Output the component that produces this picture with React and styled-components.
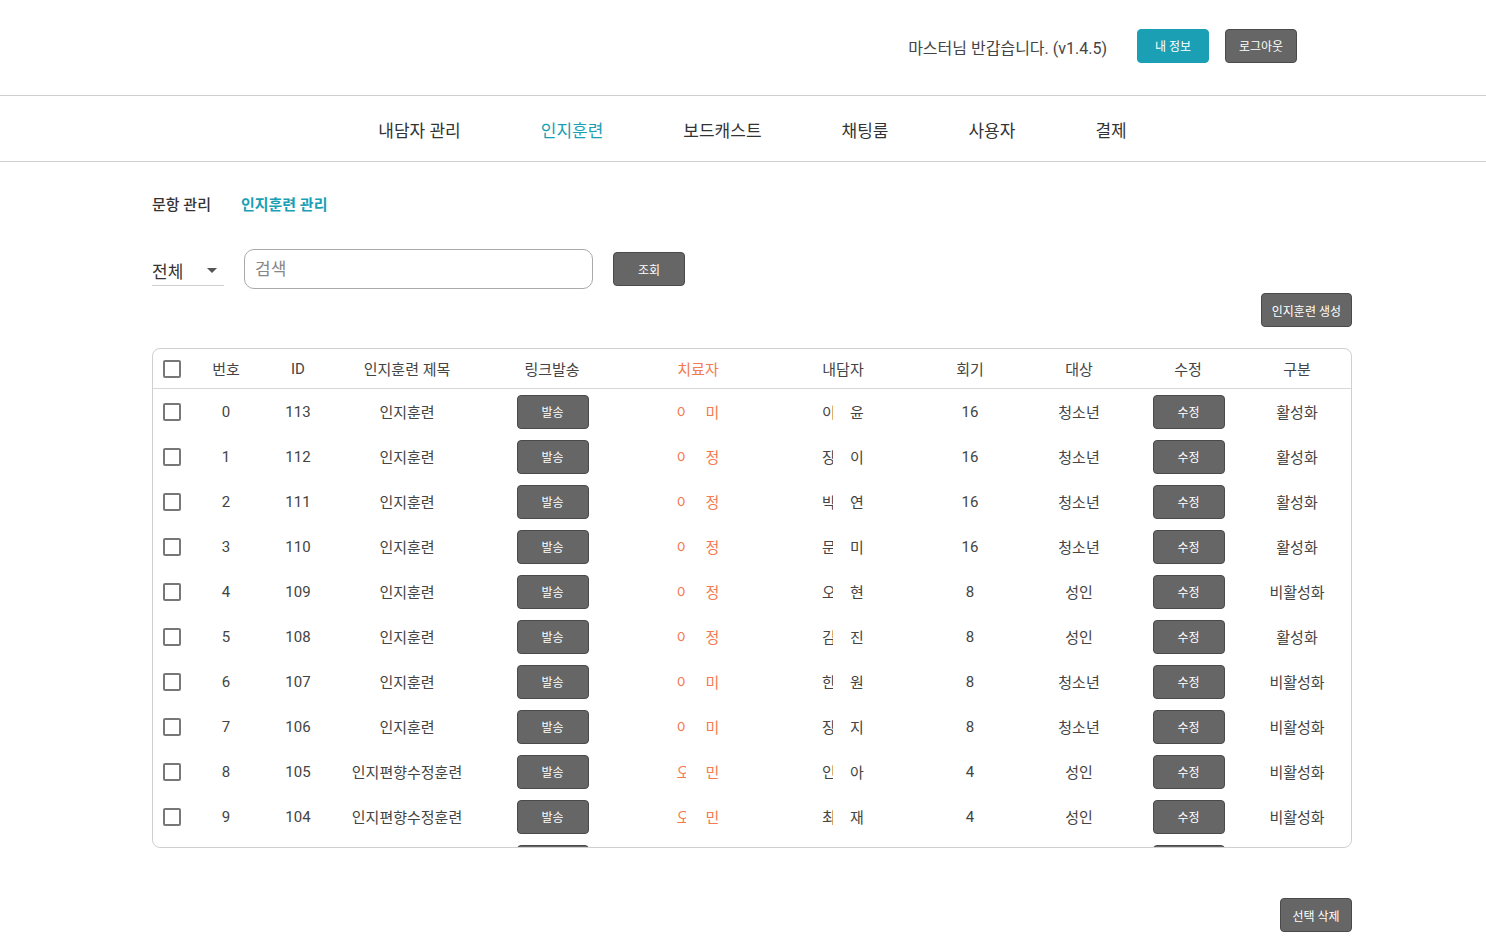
import React from 'react'
import styled, { createGlobalStyle } from 'styled-components'

const GlobalStyle = createGlobalStyle`
  body {
    margin: 0;
    background: #fff;
    font-family: Roboto, 'Noto Sans CJK KR', sans-serif;
    color: #444;
  }
`

const TEAL = '#1a9fb5'
const ORANGE = '#f47a50'

const Header = styled.header`
  height: 96px;
  box-sizing: border-box;
  border-bottom: 1px solid #cfcfcf;
  display: flex;
  align-items: center;
  justify-content: flex-end;
  padding: 0 189px 4px 0;
  gap: 16px;
`
const Greeting = styled.span`
  font-size: 16px;
  color: #444;
  margin: 2px 14px 0 0;
`
const Btn = styled.button`
  height: 34px;
  min-width: 72px;
  padding: 0 10px;
  border-radius: 4px;
  border: 1px solid ${p => (p.teal ? TEAL : '#4a4a4a')};
  background: ${p => (p.teal ? TEAL : '#666')};
  color: #fff;
  font-family: Roboto, 'Noto Sans CJK KR', sans-serif;
  font-size: 12px;
  cursor: pointer;
`
const Nav = styled.nav`
  height: 66px;
  box-sizing: border-box;
  border-bottom: 1px solid #cfcfcf;
  display: flex;
  align-items: center;
  justify-content: center;
  gap: 80px;
  padding: 2px 0 0 19px;
`
const NavItem = styled.span`
  font-size: 17px;
  color: ${p => (p.active ? TEAL : '#333')};
`
const Content = styled.main`
  width: 1200px;
  margin: 0 auto;
  padding-left: 18px;
  padding-top: 31px;
`
const Tabs = styled.div`
  display: flex;
  gap: 30px;
  height: 20px;
  align-items: center;
`
const Tab = styled.span`
  font-size: 15px;
  font-weight: ${p => (p.active ? 700 : 500)};
  color: ${p => (p.active ? TEAL : '#333')};
`
const FilterRow = styled.div`
  display: flex;
  align-items: center;
  gap: 20px;
  margin-top: 36px;
`
const Select = styled.div`
  width: 72px;
  height: 34px;
  box-sizing: border-box;
  border-bottom: 1px solid #cfcfcf;
  display: flex;
  align-items: center;
  justify-content: space-between;
  font-size: 17px;
  color: #333;
  padding-top: 4px;
`
const Caret = styled.span`
  width: 0;
  height: 0;
  border-left: 5px solid transparent;
  border-right: 5px solid transparent;
  border-top: 5px solid #555;
  margin-right: 7px;
`
const Search = styled.input`
  width: 349px;
  height: 40px;
  box-sizing: border-box;
  border: 1px solid #aaa;
  border-radius: 10px;
  padding: 0 10px;
  font-size: 17px;
  font-family: Roboto, 'Noto Sans CJK KR', sans-serif;
  outline: none;
  &::placeholder { color: #888; }
`
const RightRow = styled.div`
  display: flex;
  justify-content: flex-end;
  margin-top: ${p => p.mt}px;
`
const TableBox = styled.div`
  margin-top: 21px;
  height: 500px;
  box-sizing: border-box;
  border: 1px solid #cfcfcf;
  border-radius: 8px;
  overflow: hidden;
`
const cols = '38px 70px 74px 144px 146px 146px 144px 110px 108px 110px 108px'
const HeadRow = styled.div`
  display: grid;
  grid-template-columns: ${cols};
  height: 40px;
  border-bottom: 1px solid #d8d8d8;
  box-sizing: border-box;
  align-items: center;
`
const Row = styled.div`
  display: grid;
  grid-template-columns: ${cols};
  height: 45px;
  align-items: center;
`
const Cell = styled.div`
  display: flex;
  justify-content: center;
  align-items: center;
  font-size: 15px;
  color: ${p => (p.orange ? ORANGE : '#444')};
`
const Check = styled.span`
  width: 14px;
  height: 14px;
  border: 2px solid #777;
  border-radius: 2px;
`
const RowBtn = styled(Btn)`
  width: 72px;
  margin-left: 1px;
`
const Masked = styled.span`
  display: flex;
  align-items: center;
  gap: ${p => p.gap}px;
`
const Clip = styled.span`
  display: inline-block;
  width: ${p => p.w}px;
  overflow: hidden;
  white-space: nowrap;
`

const rows = [
  [0, 113, '인지훈련', '이', '미', '이', '윤', 16, '청소년', '활성화'],
  [1, 112, '인지훈련', '이', '정', '장', '이', 16, '청소년', '활성화'],
  [2, 111, '인지훈련', '이', '정', '박', '연', 16, '청소년', '활성화'],
  [3, 110, '인지훈련', '이', '정', '문', '미', 16, '청소년', '활성화'],
  [4, 109, '인지훈련', '이', '정', '오', '현', 8, '성인', '비활성화'],
  [5, 108, '인지훈련', '이', '정', '김', '진', 8, '성인', '활성화'],
  [6, 107, '인지훈련', '이', '미', '한', '원', 8, '청소년', '비활성화'],
  [7, 106, '인지훈련', '이', '미', '장', '지', 8, '청소년', '비활성화'],
  [8, 105, '인지편향수정훈련', '오', '민', '인', '아', 4, '성인', '비활성화'],
  [9, 104, '인지편향수정훈련', '오', '민', '최', '재', 4, '성인', '비활성화'],
  [10, 103, '인지편향수정훈련', '오', '민', '박', '우', 4, '성인', '비활성화'],
]

const heads = ['번호', 'ID', '인지훈련 제목', '링크발송', '치료자', '내담자', '회기', '대상', '수정', '구분']

export default function App() {
  return (
    <>
      <GlobalStyle />
      <Header>
        <Greeting>마스터님 반갑습니다. (v1.4.5)</Greeting>
        <Btn teal>내 정보</Btn>
        <Btn>로그아웃</Btn>
      </Header>
      <Nav>
        <NavItem>내담자 관리</NavItem>
        <NavItem active>인지훈련</NavItem>
        <NavItem>보드캐스트</NavItem>
        <NavItem>채팅룸</NavItem>
        <NavItem>사용자</NavItem>
        <NavItem>결제</NavItem>
      </Nav>
      <Content>
        <Tabs>
          <Tab>문항 관리</Tab>
          <Tab active>인지훈련 관리</Tab>
        </Tabs>
        <FilterRow>
          <Select>전체<Caret /></Select>
          <Search placeholder="검색" />
          <Btn>조회</Btn>
        </FilterRow>
        <RightRow mt={4}>
          <Btn>인지훈련 생성</Btn>
        </RightRow>
        <TableBox>
          <HeadRow>
            <Cell><Check /></Cell>
            {heads.map(h => (
              <Cell key={h} orange={h === '치료자'}>{h}</Cell>
            ))}
          </HeadRow>
          {rows.map(r => (
            <Row key={r[0]}>
              <Cell><Check /></Cell>
              <Cell>{r[0]}</Cell>
              <Cell>{r[1]}</Cell>
              <Cell>{r[2]}</Cell>
              <Cell><RowBtn>발송</RowBtn></Cell>
              <Cell orange>
                <Masked gap={20}>
                  <Clip w={9}>{r[3]}</Clip>
                  <span>{r[4]}</span>
                </Masked>
              </Cell>
              <Cell>
                <Masked gap={17}>
                  <Clip w={11}>{r[5]}</Clip>
                  <span>{r[6]}</span>
                </Masked>
              </Cell>
              <Cell>{r[7]}</Cell>
              <Cell>{r[8]}</Cell>
              <Cell><RowBtn>수정</RowBtn></Cell>
              <Cell>{r[9]}</Cell>
            </Row>
          ))}
        </TableBox>
        <RightRow mt={50}>
          <Btn>선택 삭제</Btn>
        </RightRow>
      </Content>
    </>
  )
}
